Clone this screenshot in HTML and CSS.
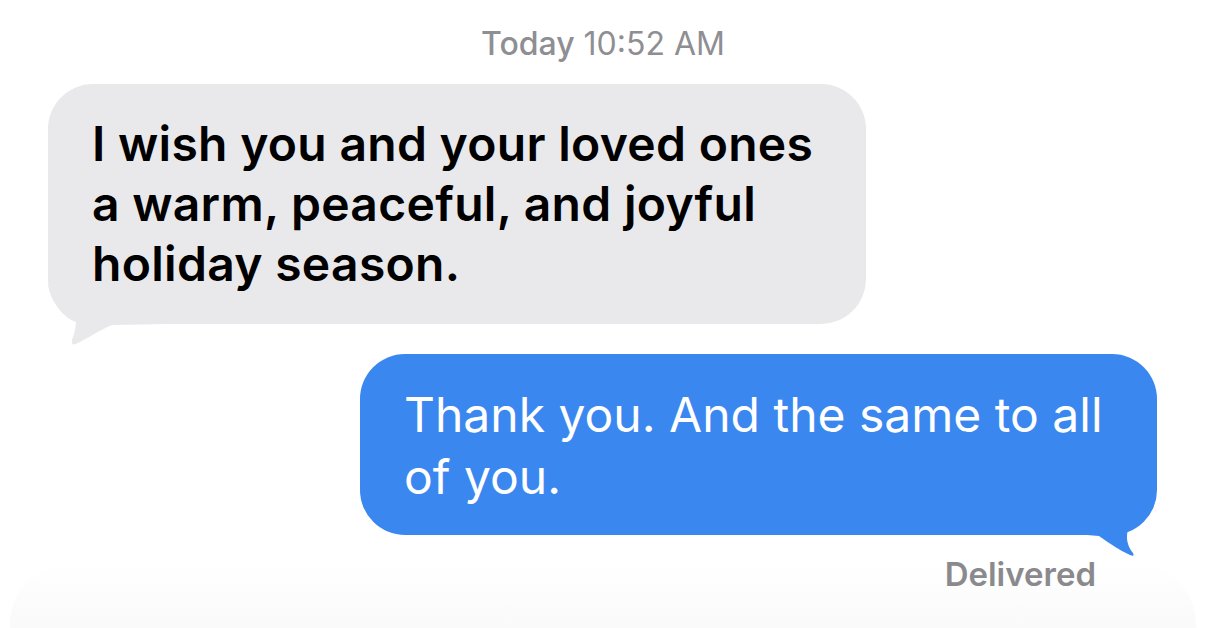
FILE: index.html
```html
<!DOCTYPE html>
<html lang="en">
<head>
    <meta charset="UTF-8">
    <meta name="viewport" content="width=device-width, initial-scale=1.0">
    <title>Messages</title>
    <link rel="stylesheet" href="styles.css">
</head>
<body>

    <div class="thread">
        <!-- Timestamp -->
        <p class="stamp"><span class="stamp-day">Today</span> 10:52 AM</p>

        <!-- Incoming message -->
        <div class="row row-in">
            <div class="bubble bubble-in">
                I wish you and your loved ones a warm, peaceful, and joyful holiday season.
                <svg class="tail tail-in" width="120" height="64" viewBox="0 0 120 64">
                    <path d="M0 0 L120 0 L120 40 L64 41 C52 46 40 54 30 59 Q23 63 24 56 C26 50 28 44 28 38 C12 32 2 14 0 0 Z" fill="#e9e9eb"/>
                </svg>
            </div>
        </div>

        <!-- Outgoing message -->
        <div class="row row-out">
            <div class="bubble bubble-out">
                Thank you. And the same to all of you.
                <svg class="tail tail-out" width="80" height="90" viewBox="0 0 80 90">
                    <path d="M0 0 L70 0 L70 8 C68 30 54 48 41 60 C38 70 42 78 46 83 Q48 87 43 85 C32 80 22 73 12 66 L0 65 Z" fill="#3b87f0"/>
                </svg>
            </div>
        </div>

        <p class="status">Delivered</p>
    </div>

    <div class="composer"></div>

</body>
</html>
```

FILE: styles.css
```css
body {
    margin: 0;
    background-color: #fff;
    font-family: 'Inter', 'Noto Sans', sans-serif;
    height: 628px;
    overflow: hidden;
}
.thread {
    padding-top: 24px;
}
.stamp {
    margin: 0;
    text-align: center;
    font-size: 32px;
    line-height: 40px;
    color: #8e8e93;
}
.stamp-day {
    font-weight: 500;
}
.row {
    display: flex;
}
.row-in {
    margin-top: 20px;
    padding-left: 48px;
}
.row-out {
    margin-top: 30px;
    justify-content: flex-end;
    padding-right: 49px;
}
.bubble {
    position: relative;
    box-sizing: border-box;
    border-radius: 45px;
    font-size: 48px;
}
.bubble-in {
    width: 818px;
    height: 240px;
    padding: 30px 30px 0 44px;
    background-color: #e9e9eb;
    color: #000;
    font-weight: 600;
    line-height: 60px;
    letter-spacing: 0.3px;
}
.bubble-out {
    width: 797px;
    height: 181px;
    padding: 30px 40px 0 44px;
    background-color: #3b87f0;
    color: #fff;
    line-height: 62px;
}
.tail {
    position: absolute;
}
.tail-in {
    left: 0;
    bottom: -24px;
}
.tail-out {
    right: -10px;
    bottom: -25px;
}
.status {
    margin: 19px 110px 0 0;
    text-align: right;
    font-size: 33px;
    line-height: 40px;
    font-weight: 600;
    color: #8a8a8e;
}
.composer {
    height: 70px;
    margin: -30px 10px 0;
    border-radius: 60px 60px 0 0;
    background: linear-gradient(#ffffff, #f9f9f9);
}
```
